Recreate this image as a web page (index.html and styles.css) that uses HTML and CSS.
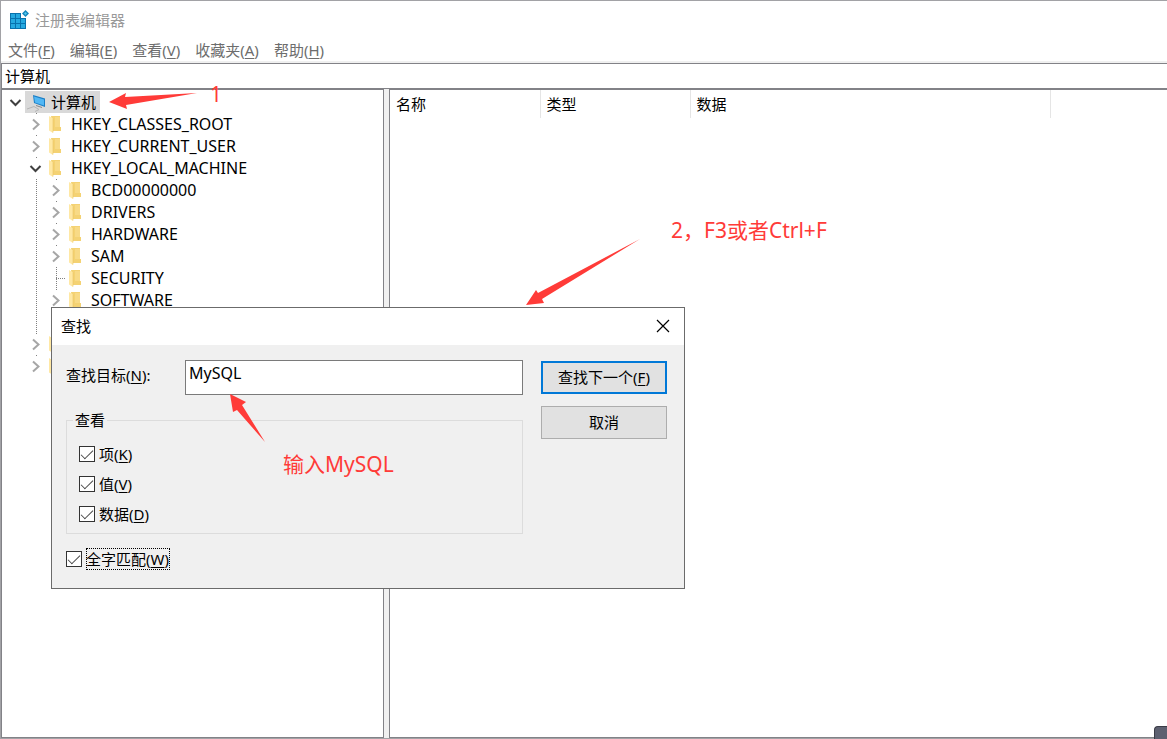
FILE: index.html
```html
<!DOCTYPE html>
<html lang="zh-CN">
  <head>
    <meta charset="utf-8">
    <title>注册表编辑器</title>
    <link rel="stylesheet" href="styles.css">
  </head>
  <body>
    <svg width="0" height="0" class="symbols">
      <symbol id="right" viewBox="0 0 16 16">
        <path d="M5 3.500L10.500 8.500L5 13.500" fill="none" stroke="#a6a6a6" stroke-width="2" />
      </symbol>
      <symbol id="down" viewBox="0 0 16 16">
        <path d="M2.500 6L7.500 11L12.500 6" fill="none" stroke="#404040" stroke-width="2" />
      </symbol>
      <symbol id="folder" viewBox="0 0 16 18">
        <path d="M3 1H12V12H13V16H5Z" fill="#f4d273" />
        <path d="M7 2H12V12H7Z" fill="#f8da86" />
        <path d="M1 1L5 3.500V18L1 15.500Z" fill="#ffe8a4" />
        <path d="M5 3.500V17.500" stroke="#e9c463" stroke-width="0.600" />
      </symbol>
    </svg>

    <div class="window">
      <header class="title-bar">
        <svg class="app-icon" width="20" height="20" viewBox="0 0 20 20">
          <path d="M1 3H17V19H1Z" fill="#0872ad" />
          <path d="M2 4H6V8H2ZM7 4H11V8H7ZM2 9H6V13H2ZM7 9H11V13H7ZM12 9H16V13H12ZM2 14H6V18H2ZM7 14H11V18H7ZM12 14H16V18H12Z" fill="#25a9e0" />
          <path d="M12 3H17V8H12Z" fill="#fff" />
          <path d="M16.500 0L20 3.500L16.500 7L13 3.500Z" fill="#1487bd" />
          <path d="M16.500 2L18 3.500L16.500 5L15 3.500Z" fill="#53c9ee" />
        </svg>
        <span>注册表编辑器</span>
      </header>

      <nav class="menu">
        <button>文件(<u>F</u>)</button>
        <button>编辑(<u>E</u>)</button>
        <button>查看(<u>V</u>)</button>
        <button>收藏夹(<u>A</u>)</button>
        <button>帮助(<u>H</u>)</button>
      </nav>

      <input class="address" type="text" value="计算机" aria-label="地址">

      <main class="panes">
        <div class="tree">
          <div class="row">
            <svg class="toggle"><use href="#down" /></svg>
            <span class="selected">
              <svg class="pc" width="20" height="20" viewBox="0 0 20 20">
                <path d="M0 17L7 14.500L12 17.500L8 19.500" fill="none" stroke="#b5b5b5" />
                <path d="M6 3L18 6.500V15L7 11Z" fill="#1b7fc6" />
                <path d="M7 4.500L17 7.500V13.500L8 10.500Z" fill="#52b8f5" />
                <path d="M9 13.500L15 15.500" stroke="#888" />
              </svg>
              计算机
            </span>
          </div>
          <ul>
            <li>
              <div class="row"><svg class="toggle"><use href="#right" /></svg><svg class="folder"><use href="#folder" /></svg><span>HKEY_CLASSES_ROOT</span></div>
            </li>
            <li>
              <div class="row"><svg class="toggle"><use href="#right" /></svg><svg class="folder"><use href="#folder" /></svg><span>HKEY_CURRENT_USER</span></div>
            </li>
            <li>
              <div class="row"><svg class="toggle"><use href="#down" /></svg><svg class="folder"><use href="#folder" /></svg><span>HKEY_LOCAL_MACHINE</span></div>
              <ul>
                <li class="row"><svg class="toggle"><use href="#right" /></svg><svg class="folder"><use href="#folder" /></svg><span>BCD00000000</span></li>
                <li class="row"><svg class="toggle"><use href="#right" /></svg><svg class="folder"><use href="#folder" /></svg><span>DRIVERS</span></li>
                <li class="row"><svg class="toggle"><use href="#right" /></svg><svg class="folder"><use href="#folder" /></svg><span>HARDWARE</span></li>
                <li class="row"><svg class="toggle"><use href="#right" /></svg><svg class="folder"><use href="#folder" /></svg><span>SAM</span></li>
                <li class="row"><span class="branch"></span><svg class="folder"><use href="#folder" /></svg><span>SECURITY</span></li>
                <li class="row"><svg class="toggle"><use href="#right" /></svg><svg class="folder"><use href="#folder" /></svg><span>SOFTWARE</span></li>
                <li class="row"><svg class="toggle"><use href="#right" /></svg><svg class="folder"><use href="#folder" /></svg></li>
              </ul>
            </li>
            <li>
              <div class="row"><svg class="toggle"><use href="#right" /></svg><svg class="folder"><use href="#folder" /></svg></div>
            </li>
            <li>
              <div class="row"><svg class="toggle"><use href="#right" /></svg><svg class="folder"><use href="#folder" /></svg></div>
            </li>
          </ul>
        </div>

        <div class="values">
          <table>
            <thead>
              <tr>
                <th class="name">名称</th>
                <th class="type">类型</th>
                <th class="data">数据</th>
              </tr>
            </thead>
          </table>
        </div>
      </main>
    </div>

    <form class="dialog" role="dialog" aria-labelledby="findTitle">
      <div class="dialog-title">
        <span id="findTitle">查找</span>
        <button type="button" class="close" aria-label="关闭">
          <svg width="14" height="14" viewBox="0 0 14 14"><path d="M1 1L13 13M13 1L1 13" stroke="#000" stroke-width="1.200" /></svg>
        </button>
      </div>
      <div class="dialog-body">
        <div class="fields">
          <div class="target">
            <label for="target">查找目标(<u>N</u>):</label>
            <input type="text" id="target" value="MySQL">
          </div>
          <fieldset>
            <legend>查看</legend>
            <label class="check"><input type="checkbox" checked><span>项(<u>K</u>)</span></label>
            <label class="check"><input type="checkbox" checked><span>值(<u>V</u>)</span></label>
            <label class="check"><input type="checkbox" checked><span>数据(<u>D</u>)</span></label>
          </fieldset>
          <label class="check"><input type="checkbox" checked><span class="focused">全字匹配(<u>W</u>)</span></label>
        </div>
        <div class="actions">
          <button type="button" class="primary">查找下一个(<u>F</u>)</button>
          <button type="button">取消</button>
        </div>
      </div>
    </form>

    <!-- red step notes over the windows -->
    <svg class="arrows" width="700" height="460" viewBox="0 0 700 460">
      <path d="M109 102L126 93L125 97L197 93L126 105L127 109Z" />
      <path d="M526 305L536 290L538 293L640 239L542 299L544 303Z" />
      <path d="M230 394L246 402L242 405L265 442L237 410L233 412Z" />
    </svg>
    <span class="note note-1">1</span>
    <span class="note note-2">2，F3或者Ctrl+F</span>
    <span class="note note-3">输入MySQL</span>
    <span class="corner"></span>
  </body>
</html>
```

FILE: styles.css
```css
* {
  box-sizing: border-box;
}
body {
  margin: 0;
  height: 100vh;
  position: relative;
  overflow: hidden;
  background: #a2a2a6;
  font: 15px/22px "Noto Sans", "Noto Sans CJK SC", sans-serif;
  color: #000;
}
button,
input {
  font: inherit;
  color: inherit;
}
.symbols {
  position: absolute;
}
.window {
  height: 100vh;
  display: flex;
  flex-direction: column;
  background: #fff;
  border: 1px solid #a2a2a6;
  border-right: 0;
}
.title-bar {
  height: 37px;
  padding-left: 8px;
  display: flex;
  align-items: center;
  gap: 6px;
  color: #999;
}
.menu {
  height: 25px;
  padding-left: 7px;
  display: flex;
  align-items: center;
  gap: 15px;
  border-bottom: 2px solid #f0f0f0;
}
.menu button {
  padding: 0;
  border: 0;
  background: none;
  color: #6d6d6d;
}
u {
  text-underline-offset: 2px;
  text-decoration-thickness: 1px;
}
.address {
  height: 26px;
  width: 100%;
  padding: 0 3px 2px;
  border: 1px solid #828287;
  border-right: 0;
}
.panes {
  flex: 1;
  display: flex;
  gap: 5px;
  background: #f0f0f0;
  min-height: 0;
}
.tree,
.values {
  background: #fff;
  border: 1px solid #828287;
}
.tree {
  width: 383px;
  padding: 1px 0 0 4px;
}
.values {
  flex: 1;
  border-right: 0;
}

/* registry tree */
.tree ul {
  list-style: none;
  margin: 0;
  padding-left: 20px;
  font-size: 16px;
  background: repeating-linear-gradient(#808080 0 1px, transparent 1px 2px) 30px 0 / 1px 100% no-repeat;
}
.row {
  display: flex;
  align-items: center;
  height: 22px;
}
.toggle {
  width: 16px;
  height: 20px;
  margin: 0 2px;
  background: #fff;
}
.branch {
  width: 10px;
  height: 1px;
  margin-left: 10px;
  background: repeating-linear-gradient(90deg, #808080 0 1px, transparent 1px 2px);
}
.folder {
  width: 16px;
  height: 18px;
  margin: 0 7px 0 2px;
}
.selected {
  display: flex;
  align-items: center;
  height: 22px;
  padding: 0 4px 0 2px;
  gap: 4px;
  margin-left: -1px;
  background: #d9d9d9;
}

/* value list */
table {
  border-collapse: collapse;
}
th {
  height: 28px;
  padding: 0 6px;
  font-weight: normal;
  text-align: left;
  border-right: 1px solid #e5e5e5;
}
.name,
.type {
  width: 150px;
}
.data {
  width: 360px;
}

/* find dialog */
.dialog {
  position: absolute;
  left: 51px;
  top: 307px;
  width: 634px;
  background: #f0f0f0;
  border: 1px solid #6b6b6b;
}
.dialog-title {
  height: 37px;
  padding: 0 14px 2px 9px;
  display: flex;
  align-items: center;
  justify-content: space-between;
  background: #fff;
}
.close {
  display: flex;
  padding: 0;
  border: 0;
  background: none;
}
.dialog-body {
  display: flex;
  gap: 18px;
  padding: 15px 17px 18px 14px;
}
.fields {
  flex: 1;
}
.target {
  display: flex;
}
.target label {
  width: 119px;
  padding-top: 4px;
}
.target input {
  flex: 1;
  min-width: 0;
  height: 35px;
  padding: 0 3px 10px;
  font-size: 16px;
  border: 1px solid #7a7a7a;
}
fieldset {
  margin: 14px 0;
  padding: 12px 12px 8px;
  border: 1px solid #dcdcdc;
  display: flex;
  flex-direction: column;
  gap: 8px;
}
legend {
  margin-left: -6px;
  padding: 0 2px;
}
.check {
  display: flex;
  align-items: center;
  gap: 4px;
}
.check input {
  appearance: none;
  width: 16px;
  height: 16px;
  margin: 0;
  border: 1px solid #333;
  background: #fff;
  display: grid;
  place-items: center;
}
.check input:checked::before {
  content: "";
  width: 11px;
  height: 5px;
  border: solid #444;
  border-width: 0 0 1px 1px;
  transform: translateY(-1px) rotate(-45deg);
}
.focused {
  padding-right: 1px;
  outline: 1px dotted #000;
  outline-offset: -1px;
}
.actions {
  width: 126px;
  padding-top: 1px;
  display: flex;
  flex-direction: column;
  gap: 12px;
}
.actions button {
  height: 33px;
  padding: 0 0 2px;
  background: #e1e1e1;
  border: 1px solid #adadad;
}
.actions .primary {
  border: 2px solid #0078d7;
}

/* step notes */
.arrows {
  position: absolute;
  left: 0;
  top: 0;
  fill: #ff3b38;
  pointer-events: none;
}
.note {
  position: absolute;
  font-size: 21px;
  line-height: 28px;
  color: #ff3b38;
  white-space: nowrap;
}
.note-1 {
  left: 210px;
  top: 80px;
}
.note-2 {
  left: 671px;
  top: 216px;
}
.note-3 {
  left: 283px;
  top: 450px;
}
.corner {
  position: absolute;
  right: 0;
  bottom: 0;
  width: 13px;
  height: 13px;
  background: #5d6070;
  border: solid #3a3b46;
  border-width: 1px 0 0 1px;
  border-radius: 4px 0 0 0;
}
```
